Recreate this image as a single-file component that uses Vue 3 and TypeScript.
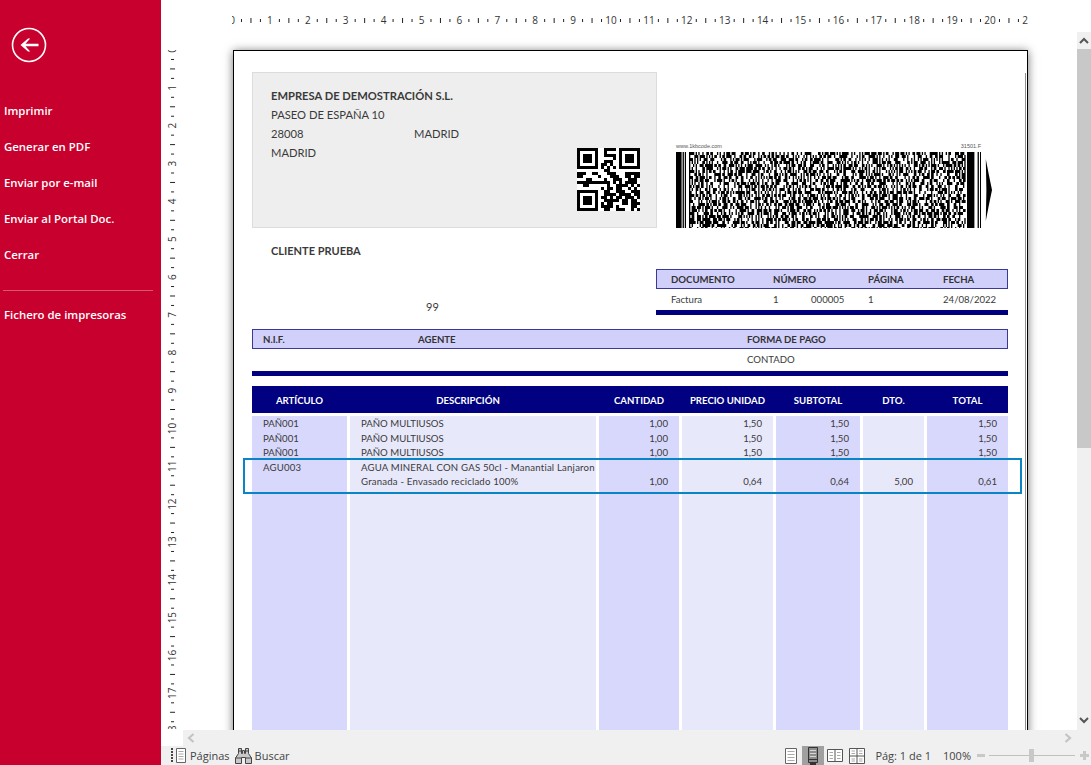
<template>
  <div class="app">
    <aside class="side">
      <button class="back" type="button" aria-label="Volver">
        <svg width="36" height="36" viewBox="0 0 36 36">
          <circle cx="18" cy="18" r="16.5" fill="none" stroke="#fff" stroke-width="1.6" />
          <path d="M9.5 18 L17 11.5 H19.200 L14.500 16.800 H27.500 V19.200 H14.500 L19.200 24.500 H17 Z" fill="#fff" />
        </svg>
      </button>
      <nav class="menu">
        <a v-for="item in menuItems" :key="item" class="menu-item">{{ item }}</a>
      </nav>
      <hr class="menu-sep" />
      <a class="menu-item">Fichero de impresoras</a>
    </aside>

    <main class="main">
      <div class="viewer">
        <div class="canvas">
          <div class="corner"></div>
          <svg class="hruler" width="796" height="50" viewBox="0 0 796 50">
            <template v-for="t in rulerTicks" :key="t.n">
              <text v-if="t.label !== ''" :x="t.pos" y="23.5" text-anchor="middle" class="ruler-num">{{ t.label }}</text>
              <rect v-else :x="t.pos - 0.5" :y="t.major ? 18 : 19" width="1" :height="t.major ? 5 : 3" fill="#222" />
            </template>
          </svg>
          <svg class="vruler" width="71" height="680" viewBox="0 0 71 680">
            <template v-for="t in rulerTicks" :key="t.n">
              <text v-if="t.label !== ''" :transform="`translate(14.5 ${t.pos}) rotate(-90)`" text-anchor="middle" class="ruler-num">{{ t.label }}</text>
              <rect v-else :x="t.major ? 9 : 10" :y="t.pos - 0.5" :width="t.major ? 5 : 3" height="1" fill="#222" />
            </template>
          </svg>

          <div class="page-wrap">
            <section class="page">
              <div class="head">
                <div class="company">
                  <div class="company-lines">
                    <div class="strong">EMPRESA DE DEMOSTRACIÓN S.L.</div>
                    <div>PASEO DE ESPAÑA 10</div>
                    <div class="city"><span>28008</span><span>MADRID</span></div>
                    <div>MADRID</div>
                  </div>
                  <svg class="qr" width="63" height="63" viewBox="0 0 21 21" shape-rendering="crispEdges">
                    <rect width="21" height="21" fill="#fff" />
                    <path :d="qrPath" fill="#000" />
                  </svg>
                </div>
                <div class="barcode">
                  <div class="barcode-cap"><span>www.1kbcode.com</span><span>31501.F</span></div>
                  <svg width="316" height="76" viewBox="0 0 316 76">
                    <rect x="0" width="5.6" height="76" fill="#000" />
                    <rect x="6.6" width="1.3" height="76" fill="#000" />
                    <rect x="8.8" width="1.2" height="76" fill="#000" />
                    <path :d="barcodePath" fill="#000" />
                    <rect x="291" width="7.4" height="76" fill="#000" />
                    <rect x="301.6" width="1.3" height="76" fill="#000" />
                    <rect x="304" width="1" height="76" fill="#000" />
                    <path d="M309.8 7 Q312.6 22 316 38 Q312.6 54 309.8 69 L310.4 38 Z" fill="#000" />
                  </svg>
                </div>
              </div>

              <div class="client-row">
                <div class="client">
                  <div class="strong">CLIENTE PRUEBA</div>
                  <div class="client-num">99</div>
                </div>
                <div class="doc">
                  <div class="bar doc-grid strong">
                    <span>DOCUMENTO</span><span>NÚMERO</span><span>PÁGINA</span><span>FECHA</span>
                  </div>
                  <div class="doc-grid doc-values">
                    <span>Factura</span>
                    <span class="doc-num"><span>1</span><span>000005</span></span>
                    <span>1</span>
                    <span>24/08/2022</span>
                  </div>
                  <div class="rule"></div>
                </div>
              </div>

              <div class="pay">
                <div class="bar pay-grid strong">
                  <span>N.I.F.</span><span>AGENTE</span><span>FORMA DE PAGO</span>
                </div>
                <div class="pay-grid pay-values"><span></span><span></span><span>CONTADO</span></div>
                <div class="rule"></div>
              </div>

              <div class="lines">
                <div class="lines-head">
                  <span v-for="col in columns" :key="col.title" :class="col.headClass">{{ col.title }}</span>
                </div>
                <div class="lines-body">
                  <div v-for="col in columns" :key="col.title" class="col" :class="[col.tone, col.align]">
                    <div v-for="(value, i) in col.values" :key="i" class="cell">{{ value }}</div>
                  </div>
                </div>
                <div class="selection"></div>
              </div>
            </section>
          </div>
        </div>

        <div class="vscroll">
          <div class="vbtn"><svg width="10" height="7" viewBox="0 0 10 7"><path d="M1 6 L5 2 L9 6" fill="none" stroke="#555" stroke-width="2" /></svg></div>
          <div class="vthumb"></div>
          <div class="vtrack"></div>
          <div class="vbtn vbtn-end"><svg width="10" height="7" viewBox="0 0 10 7"><path d="M1 1 L5 5 L9 1" fill="none" stroke="#555" stroke-width="2" /></svg></div>
        </div>
      </div>

      <div class="hscroll">
        <svg width="8" height="10" viewBox="0 0 8 10"><path d="M6.5 1 L2 5 L6.5 9" fill="none" stroke="#c4c4c4" stroke-width="2.2" /></svg>
        <svg width="8" height="10" viewBox="0 0 8 10"><path d="M1.5 1 L6 5 L1.5 9" fill="none" stroke="#c4c4c4" stroke-width="2.2" /></svg>
      </div>

      <footer class="status">
        <div class="status-left">
          <svg width="15" height="15" viewBox="0 0 15 15">
            <path d="M1 0 V15" stroke="#444" stroke-width="2" stroke-dasharray="2 1" fill="none" />
            <path d="M5.5 .5 H14.5 V14.5 H5.5 Z" fill="#fff" stroke="#666" />
            <path d="M7.5 3.5 H12.5 M7.5 6 H12.5 M7.5 8.500 H12.5 M7.5 11 H12.500" stroke="#aaa" />
          </svg>
          <span class="status-label">Páginas</span>
          <svg class="binoc" width="17" height="17" viewBox="0 0 17 17">
            <path d="M3.500 1.500 H6.500 V6.500 H7.500 V3.500 H9.500 V6.500 H10.500 V1.500 H13.500 V6.500 L16.500 11 V16.500 H10.500 V10.500 H6.500 V16.500 H.5 V11 L3.500 6.500 Z" fill="#c8c8c8" stroke="#444" />
            <path d="M.5 11 H6.500 M10.500 11 H16.500 M3.500 4 H6.500 M10.500 4 H13.500" stroke="#444" fill="none" />
          </svg>
          <span class="status-label search-label">Buscar</span>
        </div>
        <div class="status-right">
          <svg class="view-one" width="12" height="16" viewBox="0 0 12 16">
            <path d="M.5 .5 H11.500 V15.500 H.5 Z" fill="#fff" stroke="#666" />
            <path d="M2.500 3.500 H9.500 M2.500 6.500 H9.500 M2.500 9.500 H9.500 M2.500 12.500 H9.500" stroke="#aaa" />
          </svg>
          <div class="view-active">
            <svg width="10" height="19" viewBox="0 0 10 19">
              <path d="M.5 1.500 H9.500 V16.500 H.5 Z" fill="#8c8c8c" stroke="#333" />
              <path d="M2 4.500 H8 M2 7.500 H8 M2 10.500 H8" stroke="#d8d8d8" />
              <path d="M.5 13.500 H9.500" stroke="#333" />
              <rect x="2" y="16" width="6" height="3" fill="#333" />
            </svg>
          </div>
          <svg class="view-two" width="16" height="13" viewBox="0 0 16 13">
            <path d="M.5 .5 H15.500 V12.500 H.5 Z M8 .5 V12.500" fill="#fff" stroke="#555" />
            <path d="M2.500 3.500 H6 M2.500 6.500 H6 M2.500 9.500 H6 M10 3.500 H13.500 M10 6.500 H13.500 M10 9.500 H13.500" stroke="#aaa" />
          </svg>
          <svg class="view-four" width="16" height="16" viewBox="0 0 16 16">
            <path d="M.5 .5 H15.500 V15.500 H.5 Z M8 .5 V15.500 M.5 8 H15.500" fill="#fff" stroke="#555" />
            <path d="M2.500 3 H6 M2.500 5.500 H6 M10 3 H13.500 M10 5.500 H13.500 M2.500 11 H6 M2.500 13 H6 M10 11 H13.500 M10 13 H13.500" stroke="#aaa" />
          </svg>
          <span class="status-label pages">Pág: 1 de 1</span>
          <span class="status-label zoom-val">100%</span>
          <div class="zoom-minus"></div>
          <div class="slider"><div class="slider-thumb"></div></div>
          <div class="zoom-plus"></div>
        </div>
      </footer>
    </main>
  </div>
</template>

<script setup lang="ts">
import { computed } from "vue";

interface Column {
  title: string;
  tone: string;
  align: string;
  headClass?: string;
  values: string[];
}

const menuItems = ["Imprimir", "Generar en PDF", "Enviar por e-mail", "Enviar al Portal Doc.", "Cerrar"];

const CM = 37.9;

const columns: Column[] = [
  { title: "ARTÍCULO", tone: "dark", align: "left", values: ["PAÑ001", "PAÑ001", "PAÑ001", "AGU003", ""] },
  {
    title: "DESCRIPCIÓN",
    tone: "light",
    align: "left",
    headClass: "head-desc",
    values: [
      "PAÑO MULTIUSOS",
      "PAÑO MULTIUSOS",
      "PAÑO MULTIUSOS",
      "AGUA MINERAL CON GAS 50cl - Manantial Lanjaron",
      "Granada - Envasado reciclado 100%",
    ],
  },
  { title: "CANTIDAD", tone: "dark", align: "right", values: ["1,00", "1,00", "1,00", "", "1,00"] },
  { title: "PRECIO UNIDAD", tone: "light", align: "right", values: ["1,50", "1,50", "1,50", "", "0,64"] },
  { title: "SUBTOTAL", tone: "dark", align: "right", values: ["1,50", "1,50", "1,50", "", "0,64"] },
  { title: "DTO.", tone: "light", align: "right", values: ["", "", "", "", "5,00"] },
  { title: "TOTAL", tone: "dark", align: "right", values: ["1,50", "1,50", "1,50", "", "0,61"] },
];

const rulerTicks = computed(() => {
  const ticks: { n: number; pos: number; label: string; major: boolean }[] = [];
  for (let n = 0; n <= 84; n++) {
    ticks.push({
      n,
      pos: (n * CM) / 4,
      label: n % 4 === 0 ? String(n / 4) : "",
      major: n % 4 === 2,
    });
  }
  return ticks;
});

const QR_ROWS = [
  "111111100111101111111",
  "100000100100001000001",
  "101110100111101011101",
  "101110100000101011101",
  "101110100111001011101",
  "100000101101001000001",
  "111111101010101111111",
  "000000000110000000000",
  "111001100011100011111",
  "110000010001110011011",
  "000110000100111001110",
  "111111111110101011110",
  "001100000010011110101",
  "000000001011011001010",
  "111111100110011100111",
  "100000100111101111011",
  "101110101101011011101",
  "101110100111110110110",
  "101110101011000110111",
  "100000101111010000110",
  "111111100110011100101",
];

const qrPath = computed(() => {
  let d = "";
  QR_ROWS.forEach((row, y) => {
    [...row].forEach((c, x) => {
      if (c === "1") d += `M${x} ${y}h1v1h-1z`;
    });
  });
  return d;
});

const barcodePath = computed(() => {
  let seed = 417;
  const next = () => {
    seed = (seed * 1103515245 + 12345) & 0x7fffffff;
    return ((seed >> 8) % 1000) / 1000;
  };
  const cellW = 1.33;
  const cellH = 3;
  const startX = 13;
  const words = 16;
  let d = "";
  for (let r = 0; r < 26; r++) {
    for (let w = 0; w < words; w++) {
      let c = 0;
      let black = true;
      while (c < 13) {
        const run = Math.min(13 - c, 1 + Math.floor(next() * next() * 5));
        if (black) {
          const x = startX + (w * 13 + c) * cellW;
          d += `M${x.toFixed(2)} ${r * cellH}h${(run * cellW).toFixed(2)}v${cellH}h-${(run * cellW).toFixed(2)}z`;
        }
        c += run;
        black = !black;
      }
    }
  }
  return d;
});
</script>

<style scoped>
.app {
  display: flex;
  width: 1091px;
  height: 765px;
  overflow: hidden;
  background: #fff;
  font-family: "Open Sans", sans-serif;
}
.side {
  flex: 0 0 161px;
  background: #c8002e;
  color: #fff;
  padding: 27px 8px 0 4px;
  box-sizing: border-box;
}
.back {
  display: block;
  padding: 0;
  margin: 0 0 0 6.500px;
  border: 0;
  background: none;
  height: 36px;
}
.menu {
  display: flex;
  flex-direction: column;
  margin-top: 30px;
}
.menu-item {
  display: block;
  height: 36.100px;
  line-height: 36px;
  font-size: 11.400px;
  font-weight: 600;
  white-space: nowrap;
}
.menu-sep {
  margin: 17px 0 6px -1px;
  border: 0;
  border-top: 1px solid #d9566f;
}
.main {
  flex: 1;
  min-width: 0;
  display: flex;
  flex-direction: column;
}
.viewer {
  height: 730px;
  display: flex;
  overflow: hidden;
}
.canvas {
  flex: 1;
  min-width: 0;
  display: grid;
  grid-template-columns: 71px 1fr;
  grid-template-rows: 50px 680px;
  overflow: hidden;
}
.hruler {
  display: block;
  overflow: hidden;
}
.vruler {
  display: block;
  height: 679px;
  overflow: hidden;
}
.ruler-num {
  font-family: "Open Sans", sans-serif;
  font-size: 10px;
  fill: #333;
}
.page-wrap {
  padding-left: 1px;
  height: 679px;
  overflow: visible;
}
.page {
  position: relative;
  width: 795px;
  height: 1123px;
  box-sizing: border-box;
  background: #fff;
  border: 1px solid #000;
  box-shadow: 0 1px 9px rgba(0, 0, 0, 0.55);
  padding: 21px 19px 0 18px;
  font-family: Lato, sans-serif;
  font-size: 9.600px;
  color: #3a3a3a;
}
.page::after {
  content: "";
  position: absolute;
  top: 22px;
  right: 1px;
  bottom: 0;
  width: 1px;
  background: #8f8f8f;
}
.strong {
  font-weight: 700;
}
.head {
  display: flex;
  height: 156px;
}
.company {
  width: 405px;
  height: 156px;
  box-sizing: border-box;
  border: 1px solid #dcdcdc;
  background: #eee;
  padding: 13px 16px 16px 18px;
  display: flex;
  justify-content: space-between;
}
.company-lines {
  font-size: 11.200px;
  line-height: 19px;
}
.city {
  display: grid;
  grid-template-columns: 143px auto;
}
.qr {
  align-self: flex-end;
  display: block;
}
.barcode {
  margin-left: 19px;
  width: 316px;
  align-self: flex-end;
}
.barcode-cap {
  display: flex;
  justify-content: space-between;
  width: 305px;
  height: 9px;
  line-height: 7px;
  font-family: "Liberation Sans", sans-serif;
  font-size: 5.500px;
  color: #555;
}
.barcode svg {
  display: block;
}
.client-row {
  display: flex;
}
.client {
  width: 404px;
  padding: 13px 0 0 19px;
  box-sizing: border-box;
  font-size: 11px;
  line-height: 20px;
}
.client-num {
  margin: 36px 0 0 155px;
}
.doc {
  width: 352px;
  margin-top: 41px;
}
.bar {
  height: 20px;
  line-height: 20px;
  box-sizing: border-box;
  background: #d0d0fb;
  border: 1px solid #3a3a96;
  color: #333;
}
.doc-grid {
  display: grid;
  grid-template-columns: 102px 95px 75px auto;
  padding-left: 14px;
}
.doc-values {
  height: 21px;
  line-height: 22px;
  padding-left: 15px;
}
.doc-num {
  display: grid;
  grid-template-columns: 38px auto;
}
.rule {
  height: 4.500px;
  background: #000080;
}
.pay {
  margin-top: 12px;
}
.pay-grid {
  display: grid;
  grid-template-columns: 155px 329px auto;
  padding-left: 10px;
}
.pay-values {
  height: 22px;
  line-height: 22px;
  padding-left: 11px;
}
.lines {
  position: relative;
  margin-top: 10.500px;
}
.lines-head,
.lines-body {
  display: grid;
  grid-template-columns: 95px 246px 80px 91px 84px 61px 81px;
  column-gap: 3px;
}
.lines-head {
  height: 27px;
  line-height: 30px;
  background: #000080;
  color: #fff;
  font-weight: 700;
  text-align: center;
}
.head-desc {
  padding-right: 10px;
}
.lines-body {
  margin-top: 3px;
  height: 360px;
}
.col {
  line-height: 14.500px;
  padding: 1px 11px 0;
}
.col.dark {
  background: #d8d8fc;
}
.col.light {
  background: #e8e8fb;
}
.col.left {
  text-align: left;
}
.col.right {
  text-align: right;
}
.cell {
  height: 14.500px;
  white-space: nowrap;
}
.col.left .cell:nth-child(n + 4) {
  letter-spacing: 0.2px;
}
.selection {
  position: absolute;
  left: -9px;
  top: 72px;
  width: 779px;
  height: 35.500px;
  box-sizing: border-box;
  border: 2px solid #0a84c6;
}
.vscroll {
  flex: 0 0 14px;
  display: flex;
  flex-direction: column;
  padding-top: 32px;
  box-sizing: border-box;
}
.vbtn {
  height: 17px;
  background: #f0f0f0;
  display: flex;
  align-items: center;
  justify-content: center;
}
.vthumb {
  height: 399px;
  background: #c8c8c8;
}
.vtrack {
  flex: 1;
  background: #f0f0f0;
}
.vbtn-end {
  height: 20px;
}
.hscroll {
  height: 16px;
  margin-left: 22px;
  background: #f0f0f0;
  display: flex;
  justify-content: space-between;
  align-items: center;
  padding: 0 19px 0 4px;
}
.status {
  height: 19px;
  background: #f0f0f0;
  display: flex;
  justify-content: space-between;
  align-items: center;
}
.status-left {
  display: flex;
  align-items: center;
  padding-left: 10px;
}
.status-right {
  display: flex;
  align-items: center;
  height: 19px;
  padding-right: 2px;
}
.status-label {
  font-size: 11px;
  color: #444;
  margin-left: 4px;
  white-space: nowrap;
}
.search-label {
  margin-left: 3px;
}
.binoc {
  margin-left: 5px;
}
.view-active {
  margin-left: 5px;
  width: 22px;
  height: 19px;
  background: #a0a0a0;
  display: flex;
  justify-content: center;
}
.view-two {
  margin-left: 3px;
}
.view-four {
  margin-left: 6px;
}
.pages {
  margin-left: 10px;
}
.zoom-val {
  margin-left: 12px;
}
.zoom-minus {
  width: 8px;
  height: 3px;
  background: #c8c8c8;
  margin-left: 6px;
}
.slider {
  position: relative;
  width: 86px;
  height: 1px;
  background: #c0c0c0;
  margin-left: 4px;
}
.slider-thumb {
  position: absolute;
  left: 40px;
  top: -6px;
  width: 5px;
  height: 13px;
  background: #c8c8c8;
}
.zoom-plus {
  position: relative;
  width: 9px;
  height: 3px;
  background: #c8c8c8;
  margin-left: 5px;
}
.zoom-plus::after {
  content: "";
  position: absolute;
  left: 3px;
  top: -3px;
  width: 3px;
  height: 9px;
  background: #c8c8c8;
}
</style>

<style>
html,
body {
  margin: 0;
  overflow: hidden;
}
</style>
